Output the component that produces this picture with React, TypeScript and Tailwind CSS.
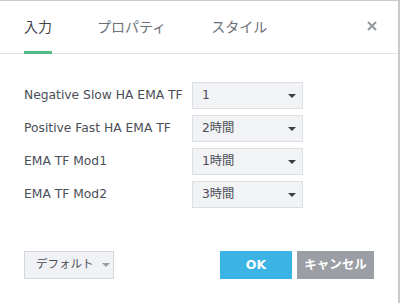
import React from "react";

const sans = "font-['DejaVu_Sans','Noto_Sans_CJK_JP',sans-serif]";

const rows = [
  { label: "Negative Slow HA EMA TF", value: "1" },
  { label: "Positive Fast HA EMA TF", value: "2時間" },
  { label: "EMA TF Mod1", value: "1時間" },
  { label: "EMA TF Mod2", value: "3時間" },
];

function Caret({ className }: { className: string }) {
  return (
    <svg width="8" height="4" viewBox="0 0 8 4" className={className}>
      <path d="M0 0 H8 L4 4 Z" fill="currentColor" />
    </svg>
  );
}

function Tab({ label, active }: { label: string; active?: boolean }) {
  return (
    <div className="relative flex h-full items-center">
      <span className={active ? "text-[#3f444d]" : "text-[#6b6f78]"}>{label}</span>
      {active ? <span className="absolute -bottom-px left-0 h-[3px] w-full bg-[#53b987]" /> : null}
    </div>
  );
}

export default function App() {
  return (
    <div className={`${sans} flex h-[303px] w-[400px] flex-col border-t border-r-2 border-[#cacaca] bg-white`}>
      {/* tabs */}
      <div className="flex h-[53px] shrink-0 items-stretch border-b border-[#e1e3e8] pl-6 pr-[21px] text-[14px]">
        <div className="flex items-stretch gap-[45px]">
          <Tab label="入力" active />
          <Tab label="プロパティ" />
          <Tab label="スタイル" />
        </div>
        <div className="ml-auto flex items-center pb-[2px]">
          <svg width="10" height="10" viewBox="0 0 10 10" className="text-[#9598a1]">
            <path d="M1 1 L9 9 M9 1 L1 9" stroke="currentColor" strokeWidth="2" />
          </svg>
        </div>
      </div>

      {/* inputs */}
      <div className="flex flex-col gap-[6px] pl-6 pt-[28px] text-[12.3px] text-[#4a4e57]">
        {rows.map((r) => (
          <div key={r.label} className="flex items-center">
            <span className="w-[168px] whitespace-nowrap">{r.label}</span>
            <div className="flex h-[27px] w-[111px] items-center border border-[#dcdfe4] bg-[#f2f3f5] pl-[9px] pr-[6px]">
              <span>{r.value}</span>
              <Caret className="ml-auto text-[#3a3d44]" />
            </div>
          </div>
        ))}
      </div>

      {/* footer */}
      <div className="mt-auto mb-[24px] flex items-center pl-6 pr-6">
        <div className="flex h-[28px] w-[90px] items-center whitespace-nowrap border border-[#d4d7dc] bg-[#f1f2f5] pl-[11px] text-[11.5px] text-[#4a4e57]">
          <span>デフォルト</span>
          <Caret className="ml-[8px] text-[#9a9ca3]" />
        </div>
        <div className="ml-auto flex gap-[5px] text-[12.5px] font-bold text-white">
          <button className="h-[28px] w-[72px] bg-[#3bb3e4]">OK</button>
          <button className="h-[28px] w-[77px] bg-[#9c9ea5]">キャンセル</button>
        </div>
      </div>
    </div>
  );
}
